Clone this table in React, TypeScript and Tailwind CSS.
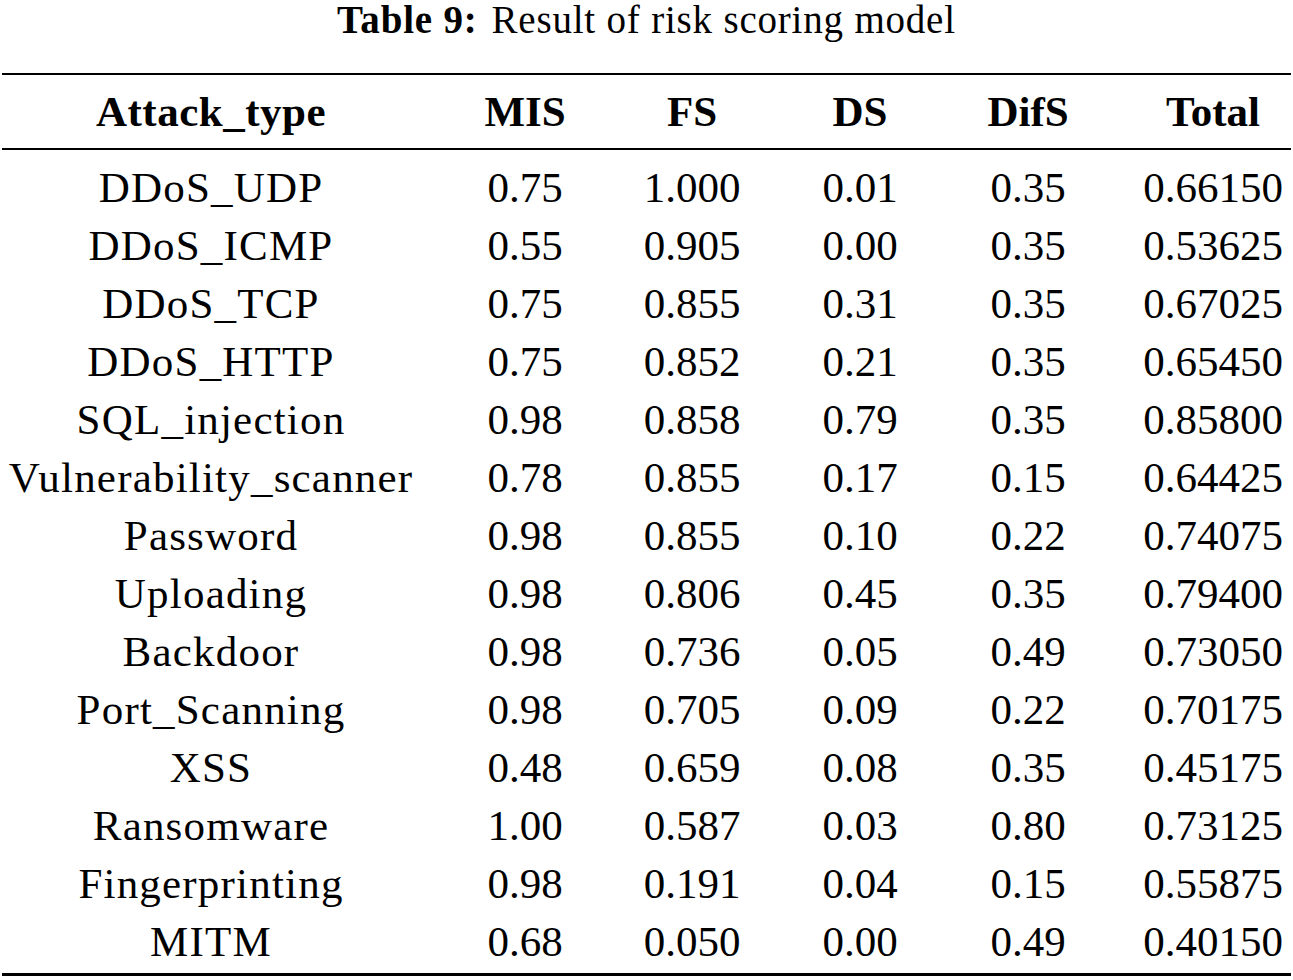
const rows: string[][] = [
	["DDoS_UDP", "0.75", "1.000", "0.01", "0.35", "0.66150"],
	["DDoS_ICMP", "0.55", "0.905", "0.00", "0.35", "0.53625"],
	["DDoS_TCP", "0.75", "0.855", "0.31", "0.35", "0.67025"],
	["DDoS_HTTP", "0.75", "0.852", "0.21", "0.35", "0.65450"],
	["SQL_injection", "0.98", "0.858", "0.79", "0.35", "0.85800"],
	["Vulnerability_scanner", "0.78", "0.855", "0.17", "0.15", "0.64425"],
	["Password", "0.98", "0.855", "0.10", "0.22", "0.74075"],
	["Uploading", "0.98", "0.806", "0.45", "0.35", "0.79400"],
	["Backdoor", "0.98", "0.736", "0.05", "0.49", "0.73050"],
	["Port_Scanning", "0.98", "0.705", "0.09", "0.22", "0.70175"],
	["XSS", "0.48", "0.659", "0.08", "0.35", "0.45175"],
	["Ransomware", "1.00", "0.587", "0.03", "0.80", "0.73125"],
	["Fingerprinting", "0.98", "0.191", "0.04", "0.15", "0.55875"],
	["MITM", "0.68", "0.050", "0.00", "0.49", "0.40150"],
];

const headers = ["Attack_type", "MIS", "FS", "DS", "DifS", "Total"];

const cols = "grid grid-cols-[418px_210px_124px_212px_124px_200px]";

const cellClass = (i: number, first: string) => {
	if (i === 0) return `text-center whitespace-nowrap ${first}`;
	if (i === 5) return "pl-[46px] text-center";
	return "text-center";
}

const App = () => {
	return (
		<div className="w-[1293px] h-[980px] bg-white text-black font-['Liberation_Serif',serif]">
			<div className="h-[40px] leading-[40px] text-center text-[39px] tracking-[0.8px]">
				<span className="font-bold">Table 9:</span>
				<span className="ml-[14px]">Result of risk scoring model</span>
			</div>

			<div className="mt-[33px] mx-[2px] border-t-2 border-b-[3px] border-black">
				<div className={`${cols} h-[75px] leading-[73px] border-b-2 border-black text-[43px] font-bold`}>
					{headers.map((h, i) => (
						<div key={h} className={cellClass(i, "tracking-[0.5px]")}>
							{h}
						</div>
					))}
				</div>

				<div className="pt-[9px] pb-[2px]">
					{rows.map((r) => (
						<div key={r[0]} className={`${cols} h-[58px] leading-[58px] text-[43px]`}>
							{r.map((c, i) => (
								<div key={i} className={cellClass(i, "tracking-[1.2px]")}>
									{c}
								</div>
							))}
						</div>
					))}
				</div>
			</div>
		</div>
	)
}

export default App;
